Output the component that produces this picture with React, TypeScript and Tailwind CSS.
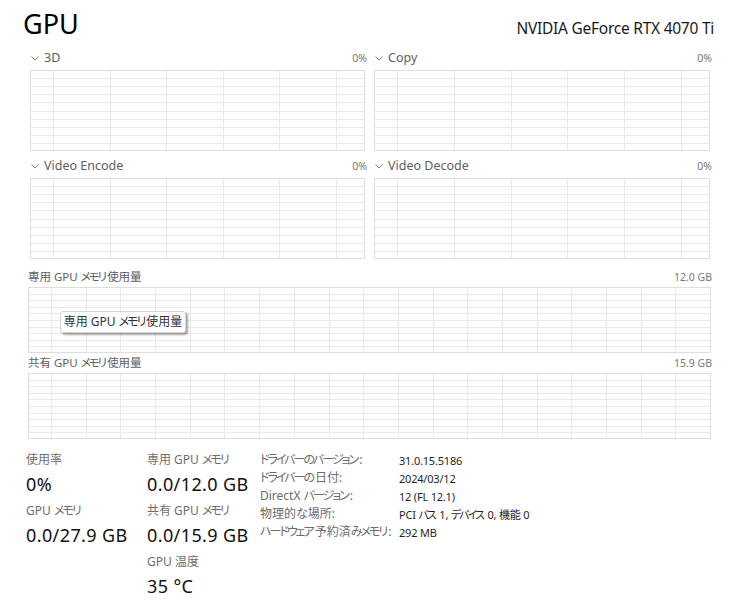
import React from "react";

type GridProps = { w: number; h: number; rows: number; off: number; step: number };

function Grid({ w, h, rows, off, step }: GridProps) {
  const xs: number[] = [];
  for (let x = off; x < w - 1; x += step) xs.push(Math.round(x));
  const ys: number[] = [];
  for (let i = 1; i < rows; i++) ys.push(Math.round((i * h) / rows));
  return (
    <svg width={w} height={h} className="block" shapeRendering="crispEdges">
      {ys.map((y) => (
        <line key={"h" + y} x1={0} x2={w} y1={y + 0.5} y2={y + 0.5} stroke="#e9e9e9" strokeWidth={1} />
      ))}
      {xs.map((x) => (
        <line key={"v" + x} x1={x + 0.5} x2={x + 0.5} y1={0} y2={h} stroke="#e9e9e9" strokeWidth={1} />
      ))}
      <rect x={0.5} y={0.5} width={w - 1} height={h - 1} fill="none" stroke="#dedede" strokeWidth={1} />
    </svg>
  );
}

// Japanese text: kana runs get tighter spacing to mimic the narrow UI kana.
function J({ t }: { t: string }) {
  const parts = t.match(/[\u3040-\u30ff]+|[^\u3040-\u30ff]+/g) || [];
  return (
    <span>
      {parts.map((p, i) =>
        /[\u3040-\u30ff]/.test(p) ? (
          <span key={i} className="tracking-[-2px] mr-[2px]">
            {p}
          </span>
        ) : (
          <span key={i}>{p}</span>
        )
      )}
    </span>
  );
}

function Chevron() {
  return (
    <svg width="8" height="5" viewBox="0 0 8 5" className="block">
      <path d="M0.5 0.5 L4 4 L7.5 0.5" fill="none" stroke="#7a7a7a" strokeWidth="1" />
    </svg>
  );
}

function SmallChart({ title, w, step, mt }: { title: string; w: number; step: number; mt: string }) {
  return (
    <div className={`flex flex-col ${mt}`}>
      <div className="flex h-[20px] items-center justify-between pl-[1px] mr-[-2px]">
        <div className="flex items-center gap-[5px]">
          <Chevron />
          <span className="text-[12.5px] leading-none text-[#606060]">{title}</span>
        </div>
        <span className="text-[10.5px] leading-none text-[#777777]">0%</span>
      </div>
      <div className="mt-[2px]">
        <Grid w={w} h={81} rows={10} off={23} step={step} />
      </div>
    </div>
  );
}

function StatBlock({ label, value, first }: { label: string; value: string; first?: boolean }) {
  return (
    <div className={`flex flex-col ${first ? "" : "mt-[6px]"}`}>
      <div className="h-[18px] flex items-center text-[12px] leading-none text-[#6e6e6e] whitespace-nowrap [font-feature-settings:'palt']">
        <J t={label} />
      </div>
      <div className="mt-[3px] h-[24px] flex items-center text-[18px] leading-none tracking-[0.4px] text-[#111111] whitespace-nowrap">
        {value}
      </div>
    </div>
  );
}

const props: [string, string][] = [
  ["ドライバーのバージョン:", "31.0.15.5186"],
  ["ドライバーの日付:", "2024/03/12"],
  ["DirectX バージョン:", "12 (FL 12.1)"],
  ["物理的な場所:", "PCI バス 1, デバイス 0, 機能 0"],
  ["ハードウェア予約済みメモリ:", "292 MB"],
];

export default function App() {
  return (
    <div className="w-[731px] h-[615px] bg-white overflow-hidden font-['Noto_Sans','Noto_Sans_CJK_JP',sans-serif]">
      {/* header */}
      <div className="h-[48px] flex items-baseline justify-between pl-[23px] pr-[17px] pt-[6px]">
        <span className="text-[27px] leading-[36px] text-black">GPU</span>
        <span className="text-[15.5px] leading-[36px] tracking-[-0.25px] text-[#1a1a1a]">NVIDIA GeForce RTX 4070 Ti</span>
      </div>

      {/* small charts */}
      <div className="flex gap-[9px] pl-[30px]">
        <div className="flex flex-col">
          <SmallChart title="3D" w={335} step={56.6} mt="" />
          <SmallChart title="Video Encode" w={335} step={56.6} mt="mt-[5px]" />
        </div>
        <div className="flex flex-col">
          <SmallChart title="Copy" w={336} step={56.75} mt="" />
          <SmallChart title="Video Decode" w={336} step={56.75} mt="mt-[5px]" />
        </div>
      </div>

      {/* big charts */}
      <div className="flex flex-col pl-[28px] w-[713px]">
        <div className="mt-[8px] flex h-[20px] items-center justify-between mr-[1px]">
          <span className="text-[11.5px] leading-none text-[#606060] whitespace-nowrap [font-feature-settings:'palt']">
            <J t="専用 GPU メモリ使用量" />
          </span>
          <span className="text-[10.5px] leading-none text-[#777777]">12.0 GB</span>
        </div>
        <div className="relative">
          <Grid w={683} h={66} rows={10} off={23} step={34.69} />
          <div className="absolute left-[32px] top-[24px] h-[22px] w-[126px] flex items-center justify-center rounded-[3px] border border-[#d4d4d4] bg-white shadow-[2px_2px_2px_rgba(0,0,0,0.35)] text-[12px] leading-none text-[#333333] whitespace-nowrap [font-feature-settings:'palt']">
            <J t="専用 GPU メモリ使用量" />
          </div>
        </div>
        <div className="flex h-[20px] items-center justify-between mr-[1px]">
          <span className="text-[11.5px] leading-none text-[#606060] whitespace-nowrap [font-feature-settings:'palt']">
            <J t="共有 GPU メモリ使用量" />
          </span>
          <span className="text-[10.5px] leading-none text-[#777777]">15.9 GB</span>
        </div>
        <div>
          <Grid w={683} h={66} rows={10} off={23} step={34.69} />
        </div>
      </div>

      {/* stats */}
      <div className="mt-[12px] flex pl-[26px]">
        <div className="w-[121px] flex flex-col">
          <StatBlock label="使用率" value="0%" first />
          <StatBlock label="GPU メモリ" value="0.0/27.9 GB" />
        </div>
        <div className="w-[113px] flex flex-col">
          <StatBlock label="専用 GPU メモリ" value="0.0/12.0 GB" first />
          <StatBlock label="共有 GPU メモリ" value="0.0/15.9 GB" />
          <StatBlock label="GPU 温度" value="35 °C" />
        </div>
        <div className="flex flex-col">
          {props.map(([k, v]) => (
            <div key={k} className="h-[18px] flex items-center leading-none whitespace-nowrap [font-feature-settings:'palt']">
              <span className="w-[139px] text-[12px] text-[#6b6b6b]">
                <J t={k} />
              </span>
              <span className="text-[11px] tracking-[-0.2px] text-[#1f1f1f]">
                <J t={v} />
              </span>
            </div>
          ))}
        </div>
      </div>
    </div>
  );
}
